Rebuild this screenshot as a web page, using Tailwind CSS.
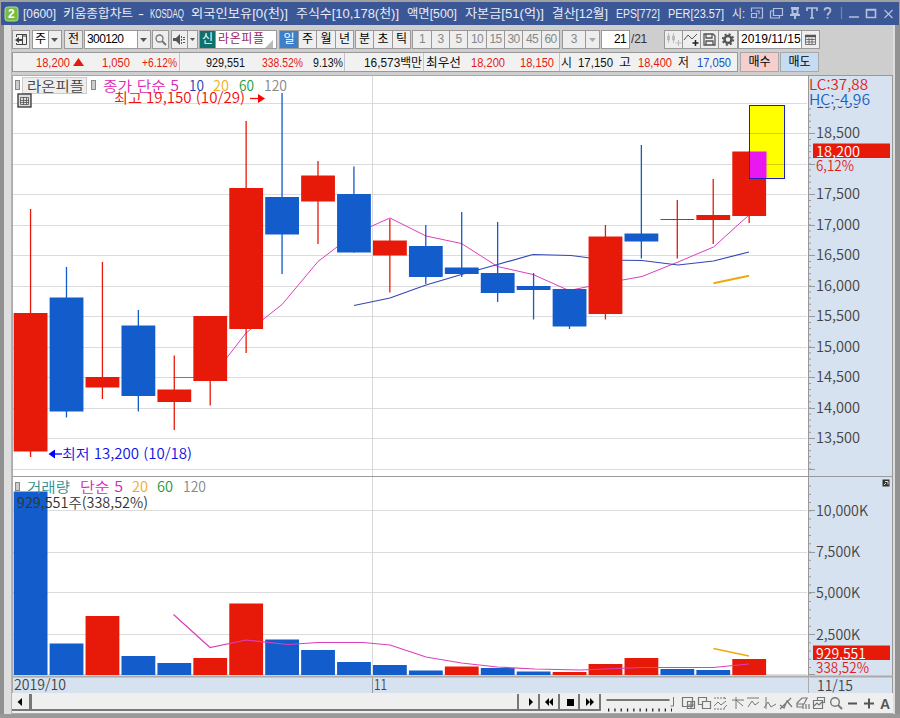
<!DOCTYPE html>
<html lang="ko">
<head>
    <meta charset="UTF-8">
    <meta name="viewport" content="width=device-width, initial-scale=1.0">
    <title>[0600] 키움종합차트</title>
    <script src="https://cdn.jsdelivr.net/npm/@tailwindcss/browser@4"></script>
</head>
<body class="w-[900px] h-[718px] overflow-hidden bg-[#a0a0a0] pt-[2px] font-['Liberation_Sans','Noto_Sans_CJK_KR',sans-serif]">
<div class="w-[900px] h-[716px] flex flex-col">
    <!-- Title bar -->
    <header class="h-[23px] ml-px mr-px bg-[#3b5795] shrink-0">
        <svg class="block" width="898" height="23" viewBox="1 2 898 23" fill="none">
            <rect x="5" y="7" width="13" height="14" rx="2.5" fill="#78bc43" stroke="#b8df98"/>
            <text x="8" y="18" font-size="12" font-weight="700" fill="#fff">2</text>
            <g id="title" fill="#e8edf7" font-family="Liberation Sans, Noto Sans CJK KR, sans-serif" font-size="12.5"></g>
            <g stroke="#b4c1dc" stroke-width="1.2">
                <path d="M751.500 12V8h11v10h-4M751.500 17.500v-4h5v4zM756 11h3v3"/>
                <path d="M773.500 8.500h9v7h-9zM773 11h-2.500v7h9v-2"/>
                <path d="M791 8h8M792.500 9h5v5h-5zM790 15h10M795 15v4" stroke-width="2"/>
                <path d="M807 11V8h10v3M812 8v10M810 18h4" stroke-width="1.700"/>
                <path d="M824.500 10.500c0-3.500 6-3.500 6 0 0 2.500-3 2.500-3 5M827.500 17v1.500" stroke-width="1.700"/>
                <path d="M841.500 7v12" stroke="#6f86b5"/>
                <path d="M849 17h10M866.500 17.500v-8h9v8zM866 10h10" stroke-width="1.600"/>
                <path d="M884.500 10l8 8M892.500 10l-8 8"/>
            </g>
        </svg>
    </header>

    <div class="flex h-[689px] border-l-[4px] border-[#919191]">
    <div class="w-[8px] shrink-0 bg-[#dedede] border-r border-[#b5b5b5]"></div>
    <div class="w-[881px] flex flex-col">
        <div class="h-[50px] bg-[#cecece] flex flex-col pt-[5px] text-black text-[12px] leading-[17px]">
            <!-- Period and symbol controls -->
            <div class="flex h-[19px] text-center [&>div]:shrink-0 [&>div]:border [&>div]:border-[#999] [&>div]:h-[19px]">
                <div class="w-[18px] bg-[#eee]"><svg width="16" height="17" fill="none" stroke="#444"><path d="M3.500 6V3.500h10v10h-10V12M9.500 4v9M10 5h3"/><path d="M2 9l4-3v2h3v2H6v2z" fill="#444" stroke="none"/></svg></div>
                <div class="w-[17px] ml-[2px] bg-white">주</div>
                <div class="w-[14px] bg-[#eee] -ml-px"><svg width="12" height="17"><path d="M2 7h7l-3.500 4z" fill="#555"/></svg></div>
                <div class="w-[19px] ml-[2px] bg-[#e8e8e8]">전</div>
                <div class="w-[54px] ml-[1px] bg-white text-left pl-[2px] tracking-[-0.6px]">300120</div>
                <div class="w-[14px] bg-[#eee] -ml-px"><svg width="12" height="17"><path d="M2 7h7l-3.500 4z" fill="#555"/></svg></div>
                <div class="w-[17px] bg-[#eee] ml-px"><svg width="15" height="17" fill="none" stroke="#777" stroke-width="1.300"><circle cx="6.500" cy="7.500" r="3.500"/><path d="M9 10l4 4" stroke-width="2"/></svg></div>
                <div class="w-[17px] bg-[#eee] ml-[2px]"><svg width="15" height="17" fill="#555"><path d="M1 7h3l4-4v11l-4-4H1zM9 5h1v2H9zM9 8h1v2H9zM9 11h1v2H9zM11 6h2v1h-2zM11 8h2v1h-2zM11 11h2v1h-2z"/></svg></div>
                <div class="w-[11px] bg-[#eee] -ml-px"><svg width="9" height="17"><path d="M2 7h5l-2.500 3z" fill="#555"/></svg></div>
                <div class="w-[17px] ml-[1px] bg-[#11706b] text-white">신</div>
                <div class="w-[62px] bg-white -ml-px text-left pl-[2px] text-[#9c1c5e] flex tracking-[0.6px]">라온피플<svg class="mt-auto" width="8" height="8"><path d="M8 0v8H0z" fill="#bbb"/></svg></div>
                <div class="w-[20px] ml-[2px] bg-[#3f7fca] text-white">일</div>
                <div class="w-[19px] -ml-px bg-[#eee]">주</div>
                <div class="w-[20px] -ml-px bg-[#eee]">월</div>
                <div class="w-[19px] -ml-px bg-[#eee]">년</div>
                <div class="w-[19px] ml-[1px] bg-[#eee]">분</div>
                <div class="w-[20px] -ml-px bg-[#eee]">초</div>
                <div class="w-[19px] -ml-px bg-[#eee]">틱</div>
                <div class="w-[20px] ml-[1px] bg-[#eee] text-[#888] tracking-[-0.7px]">1</div>
                <div class="w-[19px] -ml-px bg-[#eee] text-[#888] tracking-[-0.7px]">3</div>
                <div class="w-[19px] -ml-px bg-[#eee] text-[#888] tracking-[-0.7px]">5</div>
                <div class="w-[20px] -ml-px bg-[#eee] text-[#888] tracking-[-0.7px]">10</div>
                <div class="w-[19px] -ml-px bg-[#eee] text-[#888] tracking-[-0.7px]">15</div>
                <div class="w-[19px] -ml-px bg-[#eee] text-[#888] tracking-[-0.7px]">30</div>
                <div class="w-[20px] -ml-px bg-[#eee] text-[#888] tracking-[-0.7px]">45</div>
                <div class="w-[19px] -ml-px bg-[#eee] text-[#888] tracking-[-0.7px]">60</div>
                <div class="w-[24px] ml-[2px] bg-[#eee] text-[#888]">3</div>
                <div class="w-[15px] -ml-px bg-[#eee]"><svg width="13" height="17"><path d="M3 7h7l-3.500 4z" fill="#aaa"/></svg></div>
                <div class="w-[29px] ml-[1px] bg-white text-right pr-[3px] tracking-[-0.7px]">21</div>
                <span class="w-[34px] shrink-0 text-left pl-[1px] pt-px tracking-[-0.2px] text-[#333]">/21</span>
                <div class="w-[19px] bg-[#eee]"><svg width="17" height="17" fill="#bbb" stroke="#bbb"><path d="M2.500 5h2v4h-2zM7.500 5h2v4h-2zM3.500 2v10M8.500 2v10M13.500 9v6M10.500 12h6"/></svg></div>
                <div class="w-[19px] -ml-px bg-[#eee]"><svg width="17" height="17" fill="none" stroke="#555"><path d="M1 9l4-5 4 4 5-5"/><path d="M12.500 9v6M9.500 12h6" stroke-width="1.500" stroke="#222"/></svg></div>
                <div class="w-[19px] -ml-px bg-[#eee]"><svg width="17" height="17" fill="none" stroke="#555" stroke-width="1.300"><path d="M3 3h9l2 2v9H3zM5 3v4h6V3M5 14v-4h7v4"/></svg></div>
                <div class="w-[20px] -ml-px bg-[#eee]"><svg width="18" height="17" fill="none" stroke="#555"><circle cx="9" cy="8.500" r="3.500" stroke-width="2.500"/><circle cx="9" cy="8.500" r="5.200" stroke-width="2" stroke-dasharray="2 2.080"/></svg></div>
                <div class="w-[64px] bg-white text-left pl-[2px] tracking-[0.05px]">2019/11/15</div>
                <div class="w-[19px] -ml-px bg-[#eee]"><svg width="17" height="17" fill="none" stroke="#555"><path d="M3.500 4.500h10v9h-10zM4 8.500h9M4 11h9M7 7v6M10 7v6" stroke-width="0.800"/><path d="M3 5h11" stroke-width="2.500"/></svg></div>
            </div>
            <!-- Quote row -->
            <div class="flex h-[20px] mt-[3px]">
                <div class="w-[726px] border border-[#999] bg-[#f1f1f1] shrink-0">
                    <svg class="block" width="724" height="18" viewBox="13 53 724 18">
                        <path d="M179.500 53v18M344.500 53v18M423.500 53v18M559.500 53v18" stroke="#c4c4c4"/>
                        <g id="quote" font-family="Liberation Sans, Noto Sans CJK KR, sans-serif" font-size="12.5"></g>
                        <path d="M73 66l5.500-8 5.500 8z" fill="#e31b12"/>
                    </svg>
                </div>
                <div class="w-[39px] ml-[2px] shrink-0 border border-[#a9a9a9] bg-[#f5cfcc] text-center leading-[18px]">매수</div>
                <div class="w-[39px] ml-[1px] shrink-0 border border-[#a9a9a9] bg-[#c5dcf2] text-center leading-[18px]">매도</div>
            </div>
        </div>

        <!-- Price and volume chart -->
        <svg id="chart" class="block shrink-0" width="881" height="618" viewBox="12 75 881 618" font-family="Noto Sans CJK KR, sans-serif" font-size="14"></svg>

        <!-- Scroll and playback bar -->
        <div class="h-[21px] bg-[#efefef] border-b border-[#aaa] flex pt-px [&>div]:h-[17px] [&>div]:shrink-0 [&>div]:border-r-2 [&>div]:border-b-2 [&>div]:border-[#777]">
            <div class="w-[19px]"><svg width="17" height="15"><path d="M10 4v8L5.500 8z"/></svg></div>
            <div class="w-[488px] border-l border-l-white"></div>
            <div class="w-[21px]"><svg width="19" height="15"><path d="M10 4v8l4-4z"/></svg></div>
            <div class="w-[20px]"><svg width="18" height="15"><path d="M9 4v8L5 8zM13 4v8L9 8z"/></svg></div>
            <div class="w-[20px]"><svg width="18" height="15"><path d="M7 5h7v7H7z"/></svg></div>
            <div class="w-[21px]"><svg width="19" height="15"><path d="M6 4v8l4-4zM10 4v8l4-4z"/></svg></div>
            <svg width="292" height="19" viewBox="601 694 292 19" fill="none" stroke="#777">
                <path d="M606.500 700h63" stroke-width="2"/><path d="M673.500 697v9h-3"/>
                <path d="M608 710h64" stroke="#222" stroke-width="3" stroke-dasharray="1.300 5"/>
                <path d="M682.500 697.500h10v9h-10zM687.500 701.500h7v7h-7zM691 702v6M688 705h6" stroke-width="1.200"/>
                <path d="M698.500 697.500h8v7h-8z" stroke-width="1.200"/><path d="M702.500 701.500h8v7h-8z" stroke-width="1.200" fill="#efefef"/>
                <path d="M714 698h12M714 709h12" stroke-dasharray="2 1"/><path d="M714 706l4-4 3 3 5-4M724 697l2 2M724 708l3-3"/>
                <path d="M732 700h12M736 697v12M736 700l7 6"/>
                <path d="M747 698h12M748 707l4-6 3 4 4-3"/>
                <path d="M766 697v12M764 708l4-6 3 5 5-3"/>
                <path d="M780 709l11-11M780 705l4 3 3-7 5 6" stroke-width="1.200"/>
                <path d="M797 703l5-5h5l-3 6h-7zM797 704v3h6M803 709v-5M806 709v-5M809 709v-5" stroke-width="1.200"/>
                <path d="M817.500 697.500h7v5h-7z" stroke-width="1.200"/><path d="M813.500 700.500h9v8h-9z" fill="#efefef" stroke-width="1.200"/><path d="M814 706l3-3 2 2 3-3" stroke-width="1.200"/>
                <circle cx="835" cy="702" r="4.300" stroke-width="1.400"/><path d="M838 705l4 4" stroke-width="2"/>
                <path d="M848 703.500h9M864 703.500h10M869 698.500v10" stroke="#555" stroke-width="2"/>
                <text x="880" y="709" font-size="14" font-weight="700" fill="#555" stroke="none">A</text>
            </svg>
        </div>
    </div>
    <div class="w-[7px] shrink-0 bg-[#929292] border-l-2 border-[#ddd]"></div>
    </div>
    <div class="h-[4px] bg-[#999]"></div>
</div>

<script>
    const NS = 'http://www.w3.org/2000/svg';

    function add(parent, tag, attrs, text) {
        const el = document.createElementNS(NS, tag);
        for (const k in attrs) el.setAttribute(k, attrs[k]);
        if (text) el.textContent = text;
        parent.appendChild(el);
        return el;
    }

    // Text stretched to run from x1 to x2
    function label(parent, text, x1, x2, y, fill, extra) {
        return add(parent, 'text', Object.assign({
            x: x1, y: y, fill: fill, textLength: x2 - x1, lengthAdjust: 'spacingAndGlyphs'
        }, extra || {}), text);
    }

    const title = document.getElementById('title');
    [['[0600]', 23, 56], ['키움종합차트', 63, 133], ['-', 138, 144], ['KOSDAQ', 150, 184],
     ['외국인보유[0(천)]', 191, 288], ['주식수[10,178(천)]', 296, 399], ['액면[500]', 407, 457],
     ['자본금[51(억)]', 465, 544], ['결산[12월]', 552, 608], ['EPS[772]', 616, 660],
     ['PER[23.57]', 668, 724], ['시:', 732, 745]
    ].forEach(t => label(title, t[0], t[1], t[2], 17.5, '#e8edf7'));

    const quote = document.getElementById('quote');
    const RED = '#e31b12', BLUE = '#1650c8';
    [['18,200', 36, 70, RED], ['1,050', 102, 130, RED], ['+6.12%', 142, 177, RED],
     ['929,551', 206, 245, '#111'], ['338.52%', 262, 303, RED], ['9.13%', 313, 343, '#111'],
     ['16,573백만', 364, 422, '#111'], ['최우선', 426, 461, '#111'], ['18,200', 471, 505, RED],
     ['18,150', 520, 554, RED], ['시', 561, 572, '#111'], ['17,150', 578, 613, '#111'],
     ['고', 619, 631, '#111'], ['18,400', 638, 672, RED], ['저', 678, 689, '#111'], ['17,050', 697, 731, BLUE]
    ].forEach(t => label(quote, t[0], t[1], t[2], 66.5, t[3]));

    const chart = document.getElementById('chart');
    const UP = '#e71a0a', DOWN = '#125ccb';
    const rect = (x, y, w, h, fill, extra) => add(chart, 'rect', Object.assign({x: x, y: y, width: w, height: h, fill: fill}, extra || {}));
    const path = (d, stroke, w) => add(chart, 'path', {d: d, stroke: stroke, 'stroke-width': w || 1, fill: 'none'});
    const text = (t, x1, x2, y, fill, extra) => label(chart, t, x1, x2, y, fill, Object.assign({'font-weight': 350}, extra || {}));

    // Panes
    rect(12, 75, 881, 618, '#ededed');
    rect(12.5, 75.5, 796, 601, '#fff', {stroke: '#aaa'});
    rect(808.5, 75.5, 84, 618, '#d6e2f0', {stroke: '#999'});
    rect(12.5, 676.5, 796, 17, '#d6e2f0', {stroke: '#aaa'});

    // Grid
    [103.5, 133.5, 164.5, 194.5, 225.5, 255.5, 286.5, 316.5, 347.5, 377.5, 408.5, 438.5, 469.5, 510.5, 552.5, 592.5, 634.5, 674.5].forEach(y => {
        path('M13 ' + y + 'H807', '#dcdcdc');
        path('M809 ' + y + 'H815', '#999');
    });
    for (let y = 109; y < 470; y += 6.1) path('M809 ' + y.toFixed(1) + 'h2', '#999');
    for (let y = 486; y < 675; y += 8.25) path('M809 ' + y.toFixed(1) + 'h2', '#999');
    path('M372.500 76V675', '#d8d8d8');
    path('M372.500 677V693', '#999');
    path('M12 476.500H893', '#999');
    path('M12 676.500H893', '#aaa', 2);

    // Averages of the price
    path('M173.500 377.500H200L222 364L246 333L282 304.500L318 261.500L354 234L390 218L426 236L461.500 243.500L497.500 266.500L533 274.500L569 290.500L606 283L642 276.500L678 262L713.500 247L749 215', '#dc3fbd');
    path('M354 305.500L390 298L426 285L461.500 274.500L497.500 264.500L533 254.500L571 255.500L606 260L642 260.500L678 265L713.500 261L749 252', '#3348b4', 1.2);
    path('M713.500 283.300L749 275.700', '#efa90a', 2);

    // [up, high, top, bottom, low, volume top, volume up]
    const bars = [
        [1, 209, 313, 451.5, 457, 491.5, 0], [0, 267, 297.5, 411.5, 417.5, 643.5, 0], [1, 262, 377, 387.5, 399, 616, 1],
        [0, 310, 325.5, 396, 411.5, 656, 0], [1, 355.5, 389.5, 402, 430, 663, 0], [1, 316, 316, 381, 405.5, 658, 1],
        [1, 121, 188, 329, 353, 603.5, 1], [0, 93, 197, 234.5, 274, 639.5, 0], [1, 161, 175.5, 201.5, 244, 650, 0],
        [0, 166.5, 194, 252.5, 252.5, 662, 0], [1, 219, 240.5, 255.5, 292.5, 665, 0], [0, 225, 246, 277, 284, 670.5, 0],
        [0, 212, 267.5, 274, 277, 666.5, 1], [0, 222, 273, 293, 302, 668, 0], [0, 273, 286, 290, 319.5, 671.5, 0],
        [0, 289, 289, 326.5, 329, 672, 1], [1, 225, 236.5, 314, 319.5, 664, 1], [0, 145, 233.5, 241.5, 258.5, 658, 1],
        [1, 200, 219, 220, 258.5, 669, 0], [1, 179, 215, 220, 244, 670, 0], [1, 151.5, 151.5, 216, 223, 659, 1]
    ];
    bars.forEach((b, i) => {
        const x = 13.7 + i * 35.93, c = b[0] ? UP : DOWN;
        rect(x + 16.2, b[1], 1.3, b[4] - b[1], c);
        rect(x, b[2], 33.8, b[3] - b[2], c);
        rect(x, b[5], 33.8, 675 - b[5], b[6] ? UP : DOWN);
    });

    // Averages of the volume
    path('M173.500 614.500L210 647.500L246 640L288 644.500L318 642.500H363L390 645L426 657L461.500 663L497.500 667L535 669L580 670L642 667.500H713L749 664', '#dc3fbd', 1.2);
    path('M713.500 648.500L749 656', '#efa90a', 1.3);

    // Highlighted box
    rect(749.5, 105.5, 35, 73, '#ff0', {stroke: '#2020c0'});
    path('M750 133.500h34M750 164.500h34', '#d2d200');
    rect(750, 151.5, 16.5, 27, '#ea18f0');
    path('M749.500 178.500h35', '#2020c0');

    // Price pane legend
    rect(15.5, 80.5, 4, 9, '#ccc', {stroke: '#888'});
    rect(22.5, 77.500, 64, 16, '#eee', {stroke: '#ccc'});
    text('라온피플', 27, 84, 91, '#444');
    rect(91.500, 80.500, 4, 9, '#ccc', {stroke: '#888'});
    text('종가 단순 5', 103, 179, 91, '#dc28b4');
    text('10', 189, 204, 91, '#2440b4');
    text('20', 213, 229, 91, '#efb01a');
    text('60', 239, 254, 91, '#1d9a3e');
    text('120', 264, 287, 91, '#888');
    rect(18, 94, 13, 13, '#ddd', {stroke: '#333', 'stroke-width': 1.3});
    path('M20.500 97.500h8v7h-8zM20 100.500h9M20 102.500h9M23.500 97v8M26.500 97v8', '#555', 0.8);
    text('최고 19,150 (10/29)', 114, 245, 102.5, '#f01010');
    path('M250 98.500h9', '#f01010', 1.3);
    add(chart, 'path', {d: 'M258 94v9l7-4.500z', fill: '#f00'});
    add(chart, 'path', {d: 'M55 449.500v9l-6.500-4.500z', fill: '#00f'});
    path('M54 454h8', '#00f', 1.3);
    text('최저 13,200 (10/18)', 62, 192, 459, '#1010e8');

    // Volume pane legend
    rect(15.500, 482.500, 4, 8, '#ccc', {stroke: '#888'});
    text('거래량', 27, 70, 492, '#2b9292');
    text('단순 5', 80, 123, 492, '#dc28b4');
    text('20', 132, 148, 492, '#efb01a');
    text('60', 157, 173, 492, '#1d9a3e');
    text('120', 183, 206, 492, '#888');
    text('929,551주(338,52%)', 17, 148, 508, '#333');
    text('2019/10', 14, 66, 690, '#444');
    text('11', 374, 387, 690, '#444');

    // Axis labels
    text('19,000', 816, 860, 108, '#444');
    rect(809, 77, 80, 29.5, '#d6e2f0');
    [['18,500', 138], ['17,500', 199], ['17,000', 230], ['16,500', 260], ['16,000', 291], ['15,500', 321],
     ['15,000', 352], ['14,500', 382], ['14,000', 413], ['13,500', 443]
    ].forEach(t => text(t[0], 816, 860, t[1], '#444'));
    text('10,000K', 816, 868, 515.5, '#444');
    text('7,500K', 816, 860, 557, '#444');
    text('5,000K', 816, 860, 597.5, '#444');
    text('2,500K', 816, 860, 639.5, '#444');
    text('LC:37,88', 809, 868, 90, '#e02020');
    text('HC:-4,96', 809, 870, 105, '#1b5fc8');
    rect(813, 143.500, 77, 14.500, UP);
    text('18,200', 816, 860, 157, '#fff');
    text('6,12%', 816, 854, 171, '#e02020');
    rect(813, 645.500, 77, 14.500, UP);
    text('929,551', 816, 866, 658.500, '#fff');
    text('338,52%', 816, 869, 672.500, '#e02020');
    text('11/15', 817, 853, 690.500, '#444');
    rect(882.500, 479.500, 7, 7, '#333');
    path('M884 485l2-2M885 481.500h3v3', '#ddd');
</script>
</body>
</html>
